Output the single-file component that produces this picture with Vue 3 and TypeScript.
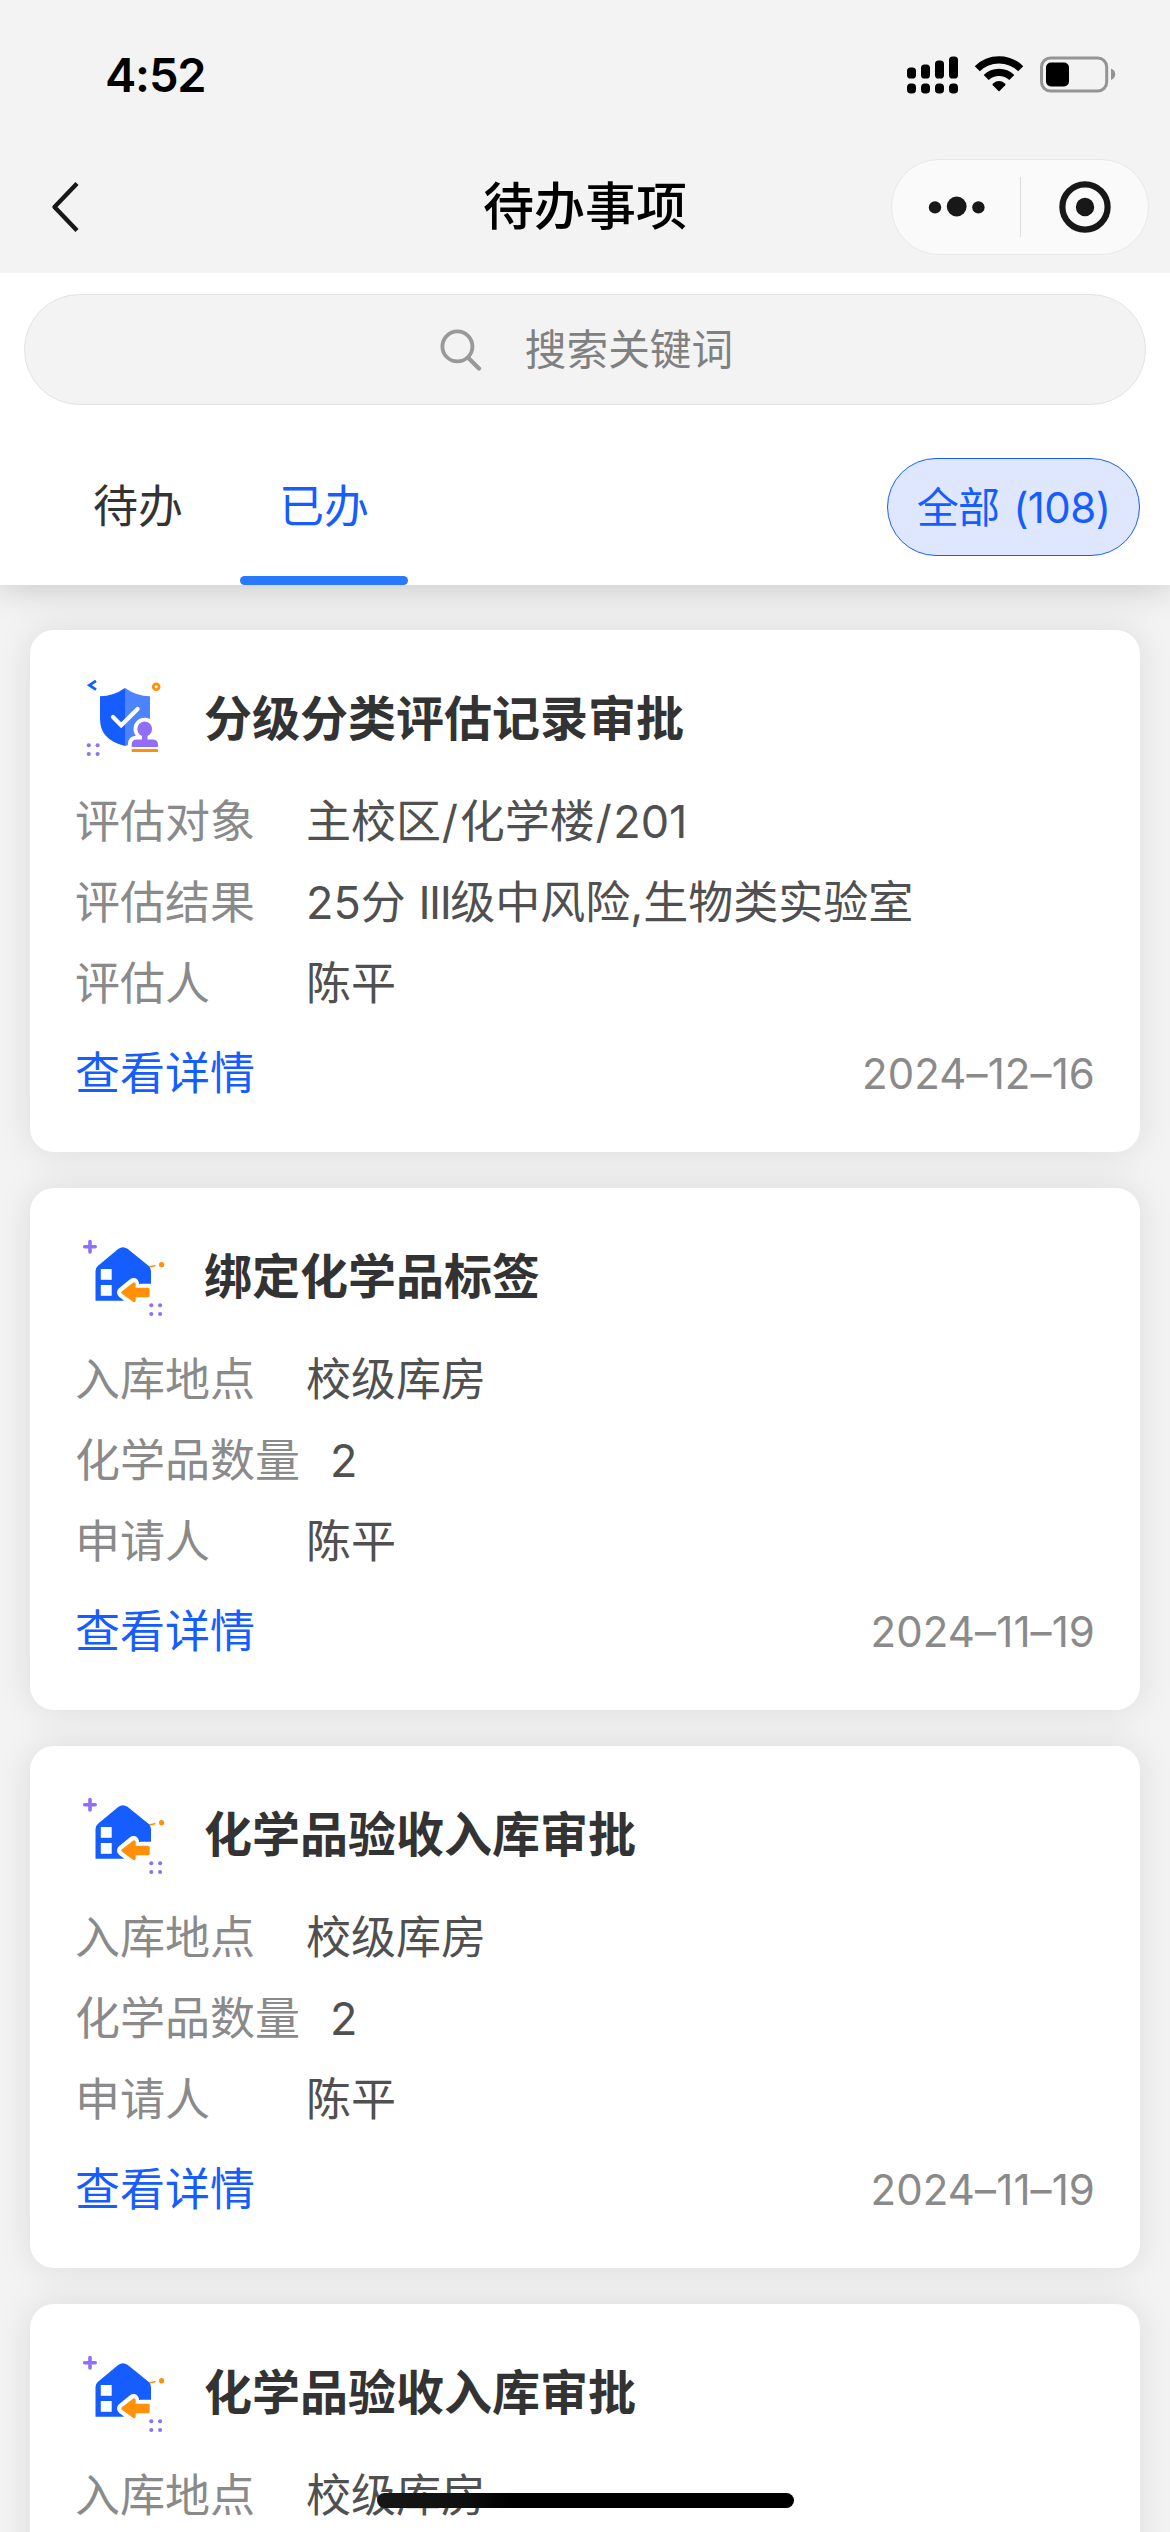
<script setup lang="ts">
import { ref } from 'vue'

interface Field {
  label: string
  value: string
}

interface Task {
  id: number
  icon: 'shield' | 'house'
  title: string
  fields: Field[]
  date: string
}

const tabs = ['待办', '已办']
const activeTab = ref(1)
const total = ref(108)

const stockFields: Field[] = [
  { label: '入库地点', value: '校级库房' },
  { label: '化学品数量', value: '2' },
  { label: '申请人', value: '陈平' },
]

const tasks: Task[] = [
  {
    id: 1,
    icon: 'shield',
    title: '分级分类评估记录审批',
    fields: [
      { label: '评估对象', value: '主校区/化学楼/201' },
      { label: '评估结果', value: '25分 III级中风险,生物类实验室' },
      { label: '评估人', value: '陈平' },
    ],
    date: '2024–12–16',
  },
  { id: 2, icon: 'house', title: '绑定化学品标签', fields: stockFields, date: '2024–11–19' },
  { id: 3, icon: 'house', title: '化学品验收入库审批', fields: stockFields, date: '2024–11–19' },
  { id: 4, icon: 'house', title: '化学品验收入库审批', fields: stockFields, date: '2024–11–19' },
]

// Slashes and roman numerals get their own letter spacing.
function runs(value: string): string[] {
  return value.split(/(\/|I+)/).filter((part) => part.length > 0)
}

function runClass(part: string): string {
  if (part === '/') return 'slash'
  return part.startsWith('I') ? 'roman' : ''
}
</script>

<template>
  <div class="screen">
    <header class="top">
      <div class="status">
        <span class="time">4:52</span>
        <svg class="status-icons" width="210" height="42" viewBox="906 53.500 210 42">
          <g fill="#000">
            <rect x="907" y="67" width="9" height="11" rx="3.6" />
            <rect x="921" y="64" width="9" height="14" rx="3.6" />
            <rect x="935" y="60" width="9" height="18" rx="3.6" />
            <rect x="949" y="56" width="9" height="22" rx="3.6" />
            <rect x="907" y="83" width="9" height="10" rx="3.8" />
            <rect x="921" y="83" width="9" height="10" rx="3.8" />
            <rect x="935" y="83" width="9" height="10" rx="3.8" />
            <rect x="949" y="83" width="9" height="10" rx="3.8" />
            <path d="M999 91 L992.800 84.800 Q992 83.800 993 83 Q999 78.200 1005 83 Q1006 83.800 1005.200 84.800 Z" />
          </g>
          <g fill="none" stroke="#000" stroke-width="7.2">
            <path d="M977.300 68.200 A31 31 0 0 1 1020.700 68.200" />
            <path d="M986.200 77 A18.400 18.400 0 0 1 1011.800 77" />
          </g>
          <rect x="1041.5" y="57.500" width="65.2" height="33" rx="9" fill="none" stroke="#949494" stroke-width="3" />
          <rect x="1046" y="62" width="23" height="24" rx="5" fill="#000" />
          <path d="M1111 68 Q1115.200 69.600 1115.200 73.800 Q1115.200 78 1111 79.600 Z" fill="#949494" />
        </svg>
      </div>
      <div class="nav">
        <svg class="back" width="32" height="52" viewBox="0 0 32 52">
          <path d="M28 2.600 L5.500 26 L28 49.400" fill="none" stroke="#181818" stroke-width="4.4" stroke-linejoin="round" />
        </svg>
        <h1 class="nav-title">待办事项</h1>
        <div class="capsule">
          <svg class="more" width="60" height="24" viewBox="0 0 60 24">
            <circle cx="8" cy="12.4" r="6.2" />
            <circle cx="29.7" cy="11.500" r="9.9" />
            <circle cx="51.4" cy="12.4" r="6.2" />
          </svg>
          <i class="split"></i>
          <svg class="close" width="54" height="54" viewBox="0 0 54 54">
            <circle cx="27" cy="27" r="22.6" fill="none" stroke="#181818" stroke-width="6.2" />
            <circle cx="27" cy="27" r="9.2" />
          </svg>
        </div>
      </div>
    </header>

    <section class="panel">
      <div class="search">
        <svg width="42" height="42" viewBox="0 0 42 42" fill="none" stroke="#999" stroke-width="3.8" stroke-linecap="round">
          <circle cx="17.4" cy="17.4" r="15" />
          <path d="M28.4 29 L39 39.6" stroke-width="4.2" />
        </svg>
        <span>搜索关键词</span>
      </div>
      <div class="tabs">
        <button
          v-for="(tab, i) in tabs"
          :key="tab"
          class="tab"
          :class="{ active: i === activeTab }"
          @click="activeTab = i"
        >
          {{ tab }}
        </button>
        <span class="filter">全部 ({{ total }})</span>
      </div>
    </section>

    <main class="list">
      <article v-for="task in tasks" :key="task.id" class="card">
        <div class="card-head">
          <svg v-if="task.icon === 'shield'" class="icon" viewBox="15 20 96 96">
            <path d="M36 30.8 L29.4 35.2 L36 39.6" fill="none" stroke="#165dff" stroke-width="2.8" />
            <circle cx="96.2" cy="36.8" r="2.9" fill="none" stroke="#ff9008" stroke-width="2.8" />
            <path d="M65 38 Q53.5 46.2 40 46.2 V69 Q40 90 65 96 Z" fill="#165dff" />
            <path d="M65 38 Q76.5 46.2 90 46.2 V69 Q90 90 65 96 Z" fill="#4c84ff" />
            <path d="M53 67 L61.2 75.2 L77.6 59" fill="none" stroke="#fff" stroke-width="4.2" stroke-linecap="round" />
            <g stroke="#fff" stroke-width="7.6" stroke-linejoin="round" fill="#fff">
              <circle cx="84.7" cy="79" r="7.4" />
              <path d="M71.7 97 V94.5 Q71.7 89.5 77 89.5 H92.5 Q98 89.5 98 94.5 V102 H71.7 Z" />
            </g>
            <circle cx="84.7" cy="79" r="7.4" fill="#8f6ff7" />
            <path d="M82 84 H87.5 V89.5 H92.5 Q98 89.5 98 94.5 V97 H71.7 V94.5 Q71.7 89.5 77 89.5 H82 Z" fill="#8f6ff7" />
            <rect x="71.7" y="99" width="26.3" height="3" rx="0.5" fill="#ff9008" />
            <g fill="#8f6ff7">
              <circle cx="28.8" cy="95.3" r="2.05" />
              <circle cx="37.6" cy="95.3" r="2.05" />
              <circle cx="28.8" cy="104" r="2.05" />
              <circle cx="37.6" cy="104" r="2.05" />
            </g>
          </svg>
          <svg v-else class="icon" viewBox="15 8 96 96">
            <path d="M30 21.5 V32 M24.7 26.8 H35.2" stroke="#8f6ff7" stroke-width="3.6" stroke-linecap="round" />
            <path d="M88 46.8 Q92 46.5 95.5 45.4" fill="none" stroke="#ff9008" stroke-width="1.6" />
            <circle cx="101.6" cy="44.7" r="2.6" fill="#ff9008" />
            <path d="M35.5 80.7 V51 Q35.5 47.8 38 45.7 L58.5 28.8 Q63 25.6 67.5 28.8 L88.5 45.7 Q91 47.8 91 51 V63.7 H80 L63.5 80.7 Z" fill="#165dff" />
            <rect x="40.8" y="49" width="10.9" height="10.8" fill="#fff" />
            <rect x="40.8" y="65" width="10.9" height="10.8" fill="#fff" />
            <path d="M62.5 72.5 L73.5 63.5 V69.5 H88 V75.5 H73.5 V80.5 Z" fill="#fff" stroke="#fff" stroke-width="11" stroke-linejoin="round" />
            <path d="M63 72.5 L74 64 V69.5 H88 V75.5 H74 V80.5 Z" fill="#ff9008" stroke="#ff9008" stroke-width="3.4" stroke-linejoin="round" />
            <g fill="#8f6ff7">
              <circle cx="91.3" cy="85.3" r="2.05" />
              <circle cx="100.1" cy="85.3" r="2.05" />
              <circle cx="91.3" cy="94" r="2.05" />
              <circle cx="100.1" cy="94" r="2.05" />
            </g>
          </svg>
          <h2>{{ task.title }}</h2>
        </div>
        <dl class="fields">
          <div v-for="field in task.fields" :key="field.label" class="field">
            <dt>{{ field.label }}</dt>
            <dd><span v-for="(part, i) in runs(field.value)" :key="i" :class="runClass(part)">{{ part }}</span></dd>
          </div>
        </dl>
        <footer class="card-foot">
          <a class="link">查看详情</a>
          <time>{{ task.date }}</time>
        </footer>
      </article>
    </main>

    <div class="home-bar"></div>
  </div>
</template>

<style>
html,
body {
  margin: 0;
  background: #f3f3f3;
}
</style>

<style scoped>
.screen {
  position: relative;
  width: 1170px;
  height: 2532px;
  overflow: hidden;
  background: #f3f3f3;
  font-family: Inter, 'Noto Sans CJK SC', sans-serif;
  color: #333;
  display: flex;
  flex-direction: column;
}

.top {
  position: relative;
  z-index: 1;
  flex: none;
  height: 273px;
  background: #f3f3f3;
}

.status {
  height: 149px;
  box-sizing: border-box;
  padding: 0 54px 0 105px;
  display: flex;
  align-items: center;
  justify-content: space-between;
}

.time {
  font-size: 47px;
  font-weight: 600;
  line-height: 60px;
  color: #000;
  letter-spacing: -1.2px;
}

.nav {
  height: 116px;
  display: grid;
  grid-template-columns: 1fr auto 1fr;
  align-items: center;
}

.back {
  margin-left: 49px;
}

.nav-title {
  margin: 0;
  font-size: 51px;
  font-weight: 500;
  line-height: 60px;
  color: #000;
}

.capsule {
  justify-self: end;
  margin-right: 21px;
  width: 258px;
  height: 96px;
  box-sizing: border-box;
  border: 1px solid #e8e8e8;
  border-radius: 48px;
  background: #fafafa;
  display: flex;
  align-items: center;
  fill: #181818;
}

.more {
  margin-left: 35px;
}

.split {
  width: 1px;
  height: 60px;
  margin-left: 33px;
  background: #dcdcdc;
}

.close {
  margin-left: 37px;
}

.panel {
  flex: none;
  height: 312px;
  box-sizing: border-box;
  padding-top: 21px;
  background: #fff;
  box-shadow: 0 0 36px rgba(0, 0, 0, 0.22);
}

.search {
  height: 111px;
  box-sizing: border-box;
  margin: 0 24px;
  padding-left: 3px;
  border: 1px solid #e3e3e3;
  border-radius: 56px;
  background: #f3f3f3;
  display: flex;
  align-items: center;
  justify-content: center;
  gap: 43px;
  font-size: 41.7px;
  line-height: 60px;
  color: #808080;
}

.tabs {
  height: 180px;
  padding: 0 30px 0 54px;
  display: flex;
  align-items: stretch;
}

.tab {
  position: relative;
  width: 168px;
  margin: 0 18px 0 0;
  padding: 24px 0 0;
  border: 0;
  background: none;
  font: inherit;
  font-size: 45px;
  line-height: 60px;
  color: #333;
}

.tab.active {
  color: #165dff;
}

.tab.active::after {
  content: '';
  position: absolute;
  left: 0;
  bottom: 0;
  width: 100%;
  height: 9px;
  border-radius: 5px;
  background: #2979ff;
}

.filter {
  align-self: flex-start;
  margin: 53px 0 0 auto;
  width: 253px;
  height: 98px;
  box-sizing: border-box;
  border: 1px solid #165dff;
  border-radius: 49px;
  background: #dfe7ff;
  color: #165dff;
  font-size: 42px;
  line-height: 97px;
  letter-spacing: -0.6px;
  word-spacing: 2.5px;
  text-align: center;
}

.list {
  flex: none;
  padding: 45px 30px 0;
  display: flex;
  flex-direction: column;
  gap: 36px;
}

.card {
  height: 522px;
  box-sizing: border-box;
  padding: 40px 45px 0;
  border-radius: 24px;
  background: #fff;
  box-shadow: 0 0 36px rgba(0, 0, 0, 0.1);
}

.card-head {
  height: 96px;
  display: flex;
  align-items: center;
}

.icon {
  flex: none;
  width: 96px;
  height: 96px;
}

h2 {
  margin: 1px 0 0 33px;
  font-size: 48px;
  font-weight: 700;
  line-height: 60px;
}

.fields {
  margin: 15px 0 0;
}

.field {
  height: 81px;
  display: flex;
  align-items: center;
  gap: 30px;
  font-size: 45px;
  line-height: 60px;
}

dt {
  min-width: 201px;
  color: #8a8a8a;
}

dd {
  margin: 0;
  color: #505050;
}

.slash {
  margin-left: 0.8px;
  letter-spacing: 1.6px;
}

.roman {
  letter-spacing: -1.5px;
}

.card-foot {
  height: 100px;
  display: flex;
  align-items: center;
  justify-content: space-between;
}

.link {
  font-size: 45px;
  line-height: 60px;
  color: #165dff;
}

time {
  font-size: 42px;
  line-height: 60px;
  letter-spacing: 0.1px;
  color: #8a8a8a;
}

.home-bar {
  position: absolute;
  left: 377px;
  bottom: 24px;
  width: 417px;
  height: 15px;
  border-radius: 8px;
  background: linear-gradient(90deg, #161616 0, #101010 20%, #000 32%);
}
</style>
